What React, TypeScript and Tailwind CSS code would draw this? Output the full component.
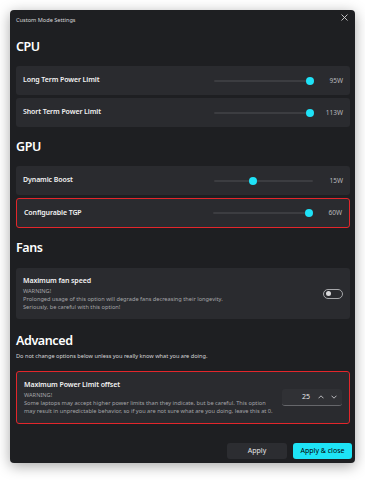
import React from "react";

const font = { fontFamily: '"Noto Sans", "Open Sans", sans-serif' };

function Slider({ pos, value }: { pos: number; value: string }) {
  return (
    <div className="flex items-center">
      <div className="relative h-[2px] w-[99px] rounded-full bg-[#3c3d41]">
        {/* thumb position comes from data */}
        <div
          className="absolute top-1/2 h-[8px] w-[8px] -translate-x-1/2 -translate-y-1/2 rounded-full bg-[#1fe2f7]"
          style={{ left: `${pos * 100}%` }}
        />
      </div>
      <div className="ml-[6px] w-[24px] text-right text-[6.5px] text-[#b9babd]">{value}</div>
    </div>
  );
}

function SliderRow({ label, pos, value, danger }: { label: string; pos: number; value: string; danger?: boolean }) {
  return (
    <div
      className={
        "flex items-center justify-between rounded-[3px] bg-[#2a2b2f] pl-[7px] pr-[7px] " +
        (danger ? "h-[30px] border border-[#e3262b]" : "h-[29px]")
      }
    >
      <div className="text-[7px] font-semibold tracking-[-0.1px] text-[#f2f2f2]">{label}</div>
      <Slider pos={pos} value={value} />
    </div>
  );
}

function Heading({ children, className = "" }: { children: React.ReactNode; className?: string }) {
  return (
    <div className={"h-[18px] text-[12.5px] font-semibold leading-[18px] tracking-[-0.4px] text-white " + className}>
      {children}
    </div>
  );
}

function Desc({ lines }: { lines: string[] }) {
  return (
    <div className="mt-[1px] text-[5.65px] leading-[8px] text-[#a4a5a8]">
      {lines.map((l) => (
        <div key={l}>{l}</div>
      ))}
    </div>
  );
}

export default function App() {
  return (
    <div className="min-h-[480px] w-[365px] bg-white pt-[10px]" style={font}>
      <div className="ml-[10px] flex h-[453px] w-[345px] flex-col rounded-[4px] bg-[#1e1f22] pl-[6px] pr-[5px] shadow-[0_3px_14px_rgba(0,0,0,0.35)]">
        {/* title bar */}
        <div className="flex h-[20px] items-center justify-between">
          <div className="text-[5.6px] text-[#d6d6d8]">Custom Mode Settings</div>
          <svg className="mr-[2px] -mt-[6px]" width="7" height="7" viewBox="0 0 7 7" fill="none" stroke="#d0d0d2" strokeWidth="0.9">
            <path d="M0.5 0.5 L6.5 6.5 M6.5 0.5 L0.5 6.5" />
          </svg>
        </div>

        <Heading className="mt-[8px]">CPU</Heading>
        <div className="mt-[10px] flex flex-col gap-[3px]">
          <SliderRow label="Long Term Power Limit" pos={0.97} value="95W" />
          <SliderRow label="Short Term Power Limit" pos={0.97} value="113W" />
        </div>

        <Heading className="mt-[11px]">GPU</Heading>
        <div className="mt-[10px] flex flex-col gap-[3px]">
          <SliderRow label="Dynamic Boost" pos={0.39} value="15W" />
          <SliderRow label="Configurable TGP" pos={0.97} value="60W" danger />
        </div>

        <Heading className="mt-[11px]">Fans</Heading>
        <div className="mt-[11px] flex h-[51px] items-center justify-between rounded-[3px] bg-[#2a2b2f] pl-[7px] pr-[7px]">
          <div>
            <div className="text-[7px] font-semibold leading-[10px] tracking-[-0.1px] text-[#f2f2f2]">Maximum fan speed</div>
            <Desc
              lines={[
                "WARNING!",
                "Prolonged usage of this option will degrade fans decreasing their longevity.",
                "Seriously, be careful with this option!",
              ]}
            />
          </div>
          <div className="flex h-[10px] w-[20px] items-center rounded-full border border-[#a6a7aa] px-[2px]">
            <div className="h-[5px] w-[5px] rounded-full bg-[#d9d9db]" />
          </div>
        </div>

        <Heading className="mt-[13px]">Advanced</Heading>
        <div className="mt-[2px] text-[5.6px] leading-[8px] text-[#d6d6d8]">
          Do not change options below unless you really know what you are doing.
        </div>
        <div className="mt-[11px] flex h-[53px] items-center justify-between rounded-[3px] border border-[#e3262b] bg-[#2a2b2f] pl-[7px] pr-[7px]">
          <div>
            <div className="text-[7px] font-semibold leading-[10px] tracking-[-0.1px] text-[#f2f2f2]">
              Maximum Power Limit offset
            </div>
            <Desc
              lines={[
                "WARNING!",
                "Some laptops may accept higher power limits than they indicate, but be careful. This option",
                "may result in unpredictable behavior, so if you are not sure what are you doing, leave this at 0.",
              ]}
            />
          </div>
          <div className="flex h-[17px] w-[60px] items-center justify-end rounded-[3px] border-b border-[#66676b] bg-[#303135] pr-[5px]">
            <span className="text-[7px] text-[#e6e6e8]">25</span>
            <svg className="ml-[8px]" width="6" height="4" viewBox="0 0 6 4" fill="none" stroke="#c9cacd" strokeWidth="0.9">
              <path d="M0.5 3.3 L3 0.8 L5.5 3.3" />
            </svg>
            <svg className="ml-[7px]" width="6" height="4" viewBox="0 0 6 4" fill="none" stroke="#c9cacd" strokeWidth="0.9">
              <path d="M0.5 0.7 L3 3.2 L5.5 0.7" />
            </svg>
          </div>
        </div>

        <div className="mt-[19px] flex justify-end gap-[6px]">
          <button className="h-[16px] w-[60px] rounded-[3px] bg-[#2c2d31] text-[7px] text-[#e6e6e8]">Apply</button>
          <button className="-mr-[2px] h-[16px] w-[59px] rounded-[3px] bg-[#1ee4f6] text-[7px] text-black">Apply &amp; close</button>
        </div>
      </div>
    </div>
  );
}
